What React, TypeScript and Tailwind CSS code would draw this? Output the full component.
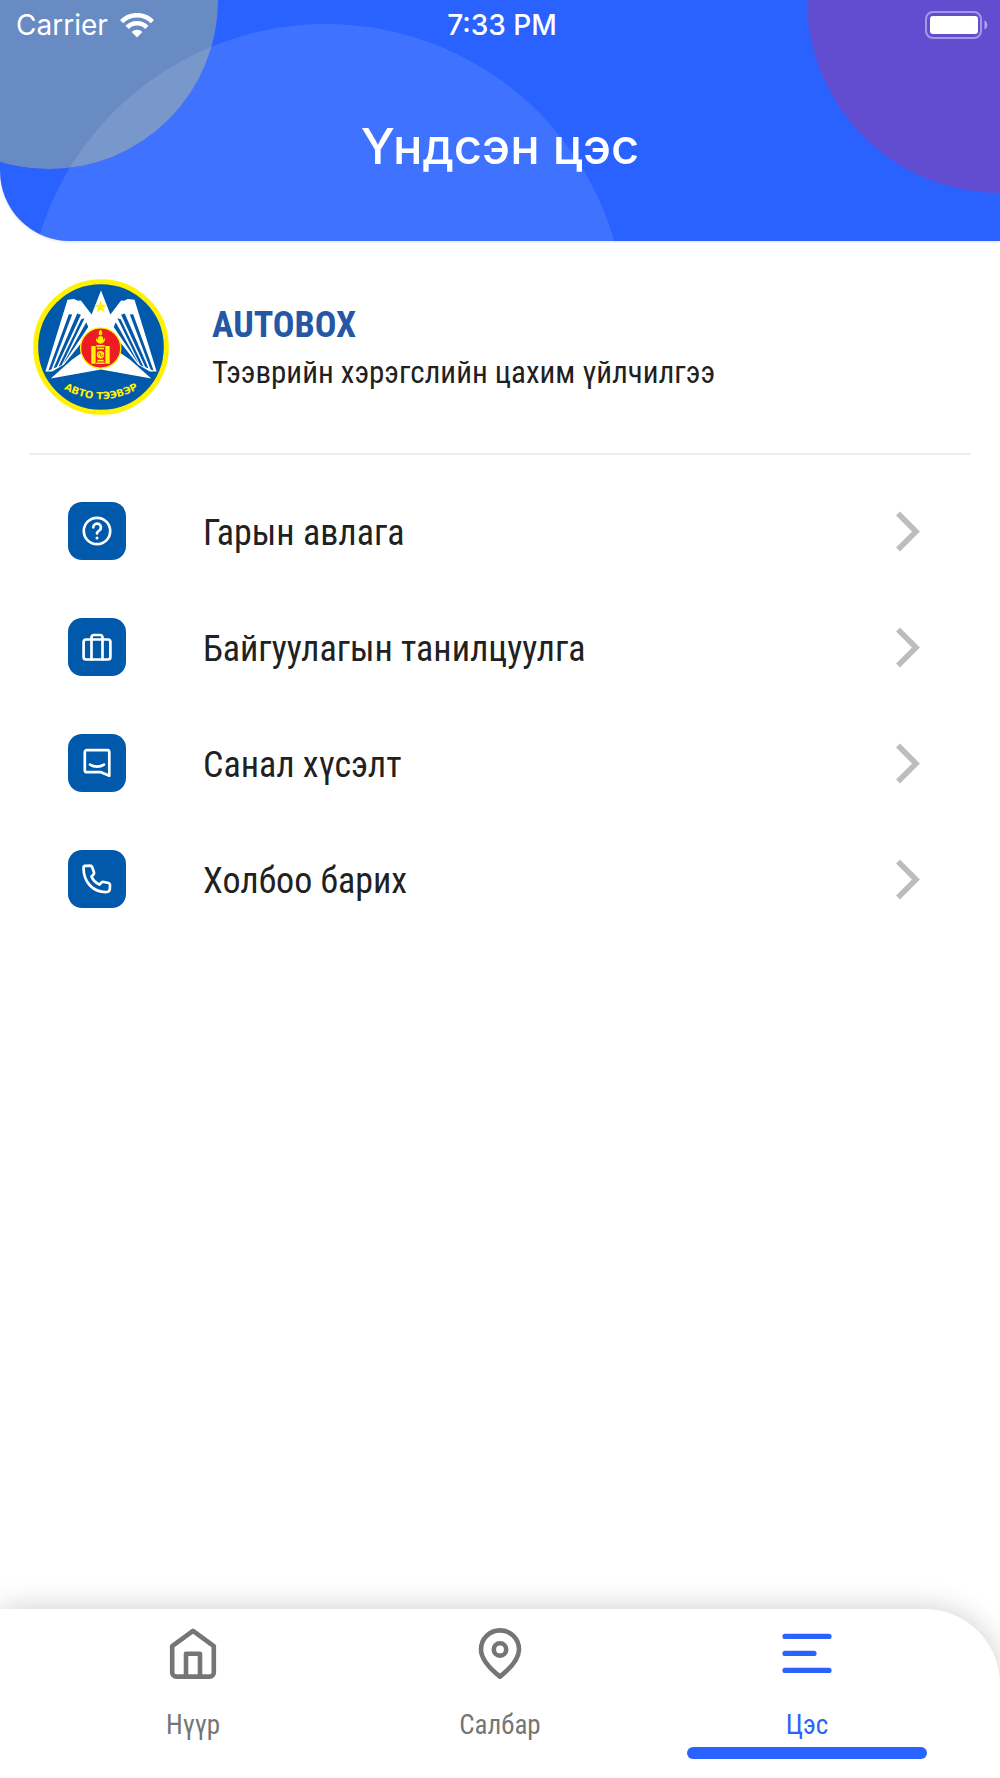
import type { ReactNode } from "react";
import clsx from "clsx";

const menuItems = [
  { label: "Гарын авлага", icon: <HelpIcon /> },
  { label: "Байгуулагын танилцуулга", icon: <SuitcaseIcon /> },
  { label: "Санал хүсэлт", icon: <MessageIcon /> },
  { label: "Холбоо барих", icon: <PhoneIcon /> },
];

const tabs = [
  { label: "Нүүр", icon: <HomeIcon />, active: false },
  { label: "Салбар", icon: <PinIcon />, active: false },
  { label: "Цэс", icon: <MenuIcon />, active: true },
];

function RowIcon({ children }: { children: ReactNode }) {
  return (
    <svg
      viewBox="0 0 32 32"
      className="h-8 w-8"
      fill="none"
      stroke="currentColor"
      strokeWidth="2.7"
      strokeLinecap="round"
      strokeLinejoin="round"
      aria-hidden="true"
    >
      {children}
    </svg>
  );
}

function HelpIcon() {
  return (
    <RowIcon>
      <circle cx="16" cy="16" r="13.2" />
      <path d="M12.3 12.3a3.8 3.8 0 1 1 6 3.2c-1.6 1.1-2.3 1.8-2.3 3" />
      <path d="M16 22.9v.1" strokeWidth="3" />
    </RowIcon>
  );
}

function SuitcaseIcon() {
  return (
    <RowIcon>
      <rect x="2.6" y="8.5" width="26.8" height="20" rx="2.5" />
      <path d="M10.5 8.5V6.2a2.2 2.2 0 0 1 2.2-2.2h6.6a2.2 2.2 0 0 1 2.2 2.2v2.3M10.5 8.5v20M21.5 8.5v20" />
    </RowIcon>
  );
}

function MessageIcon() {
  return (
    <RowIcon>
      <path d="M28.3 28.8 20 25.2H5.8a2 2 0 0 1-2-2V5.2a2 2 0 0 1 2-2h20.5a2 2 0 0 1 2 2z" />
      <path d="M9 17.6c4 2.6 10 2.6 14 0" />
    </RowIcon>
  );
}

function PhoneIcon() {
  return (
    <RowIcon>
      <path d="M4 2.8 9 2.6q1.6 0 2.2 1.6l1.8 5q.4 1.4-.7 2.5l-1.8 1.8c1.5 3.7 4.3 6.5 8 8.1l1.9-2q1-.9 2.4-.6l4.8 1q1.4.4 1.4 2l-.2 4q-.2 2.6-2.8 3C12 29.6 2.6 19 2.5 5q0-2 1.5-2.2z" />
    </RowIcon>
  );
}

function TabIcon({ children }: { children: ReactNode }) {
  return (
    <svg
      viewBox="0 0 52 52"
      className="h-[52px] w-[52px]"
      fill="none"
      stroke="currentColor"
      strokeWidth="4.6"
      strokeLinecap="round"
      strokeLinejoin="round"
      aria-hidden="true"
    >
      {children}
    </svg>
  );
}

function HomeIcon() {
  return (
    <TabIcon>
      <path d="M5.2 19.2 26 3.8l20.8 15.4v26.2a4.2 4.2 0 0 1-4.2 4.2H9.4a4.2 4.2 0 0 1-4.2-4.2z" />
      <path d="M19 49V26.8h14V49" />
    </TabIcon>
  );
}

function PinIcon() {
  return (
    <TabIcon>
      <path d="M26 49.6C19 44 7 34 7 22.4a19 19 0 0 1 38 0C45 34 33 44 26 49.6z" />
      <circle cx="26" cy="22.4" r="6.2" />
    </TabIcon>
  );
}

function MenuIcon() {
  return (
    <TabIcon>
      <path d="M4 9.4h44M4 26.4h29M4 43.4h44" strokeWidth="5.2" />
    </TabIcon>
  );
}

function WifiIcon() {
  return (
    <svg viewBox="0 0 34 25" className="h-[25px] w-[34px]" fill="none" stroke="currentColor" aria-hidden="true">
      <path d="M1.6 8.6a21.8 21.8 0 0 1 30.8 0" strokeWidth="4.6" />
      <path d="M7.1 14.3a14 14 0 0 1 19.8 0" strokeWidth="4.6" />
      <path d="M17 24.5 11.6 19a7.6 7.6 0 0 1 10.8 0z" fill="currentColor" stroke="none" />
    </svg>
  );
}

function BatteryIcon() {
  return (
    <svg viewBox="0 0 64 28" className="h-7 w-16" fill="none" aria-hidden="true">
      <rect x="2" y="1" width="55" height="26" rx="7" stroke="#fff" strokeOpacity=".42" strokeWidth="2" />
      <rect x="6" y="5" width="48" height="18" rx="3" fill="#fff" />
      <path d="M60.5 9.5c3.8 1.8 3.8 7.2 0 9z" fill="#fff" fillOpacity=".5" />
    </svg>
  );
}

/* One wing of the emblem, the other one is mirrored */
function Wing() {
  return (
    <g>
      <path d="M79 307 145 93l20-2 11 5 9-1 32 42 28-72v130l-45 10-66 82-35 20z" fill="#fff" />
      <path
        d="m149 136 10 1L97 301l-9 3zM174 134l11 4-72 156-10 4zM186 151l10-3-68 140-10 5zM201 160l6 14-66 98-9 12z"
        fill="#0059aa"
      />
      <path d="m95 328 63-56 32-22h55v51z" fill="#fff" />
    </g>
  );
}

function Emblem() {
  return (
    <svg viewBox="42 31 406 406" className="h-[136px] w-[136px] shrink-0" role="img" aria-label="Авто тээвэр">
      <defs>
        <path id="emblem-arc" d="M98 336Q245 444 392 336" />
      </defs>
      <circle cx="245" cy="234" r="195" fill="#0059aa" stroke="#fff200" strokeWidth="15" />
      <Wing />
      <g transform="matrix(-1 0 0 1 490 0)">
        <Wing />
      </g>
      <path d="m244 95 5 13h13l-10 9 4 14-12-8-12 8 4-14-10-9h13z" fill="#fff200" />
      <circle cx="244" cy="237" r="60" fill="#ed1c24" stroke="#fff200" strokeWidth="4" />
      <g fill="#fff200">
        <path d="M216 231h13v53h-13zM258 231h13v53h-13z" />
        <path d="M231 228h25v5h-25zM233 236h21v5h-21zM231 280h25v5h-25zM234 272h19v5h-19z" />
        <circle cx="243.5" cy="257" r="11" />
        <circle cx="243.5" cy="209" r="8" />
        <path d="M230 206c2 12 25 12 27 0 3 24-30 24-27 0zM243.5 182c9 10 5 16 0 18-6-3-8-8 0-18z" />
      </g>
      <path d="M237 257c2-7 8-7 7 0s5 7 7 0" fill="none" stroke="#ed1c24" strokeWidth="2.5" />
      <text
        fill="#fff200"
        fontSize="30"
        fontWeight="700"
        fontFamily="DejaVu Sans, Liberation Sans, sans-serif"
        textAnchor="middle"
      >
        <textPath href="#emblem-arc" startOffset="50%">
          АВТО ТЭЭВЭР
        </textPath>
      </text>
    </svg>
  );
}

function Header() {
  return (
    <header className="relative overflow-hidden rounded-bl-[70px] bg-[#2962ff] pb-16 text-white shadow-sm">
      <div className="absolute -top-[169px] -left-[120px] h-[338px] w-[338px] rounded-full bg-[#ffeb3b]/30" />
      <div className="absolute top-6 left-[26px] h-[600px] w-[600px] rounded-full bg-white/10" />
      <div className="absolute -top-[193px] -right-[193px] h-[386px] w-[386px] rounded-full bg-[#e91e63]/30" />

      {/* Status bar */}
      <div className="relative grid h-[50px] grid-cols-3 items-center pr-3 pl-4 font-[Inter,sans-serif] text-[28px] leading-8">
        <div className="flex items-center gap-3">
          <span>Carrier</span>
          <WifiIcon />
        </div>
        <span className="text-center font-medium">7:33 PM</span>
        <div className="flex justify-end">
          <BatteryIcon />
        </div>
      </div>

      <h1 className="relative mt-[67px] text-center font-[Inter,sans-serif] text-[49px] leading-[60px] font-medium">
        Үндсэн цэс
      </h1>
    </header>
  );
}

export default function App() {
  return (
    <div className="flex min-h-screen flex-col bg-white font-['Roboto_Condensed',Roboto,sans-serif] text-[#212121]">
      <Header />

      <main className="flex-1">
        <section className="mx-[29px] flex items-center gap-[43px] border-b-2 border-[#eeeeee] px-1 pt-[38px] pb-[38px]">
          <Emblem />
          <div className="pt-1">
            <h2 className="text-[36px] leading-[48px] font-bold text-[#2557a5]">AUTOBOX</h2>
            <p className="text-[31px] leading-[48px]">Тээврийн хэрэгслийн цахим үйлчилгээ</p>
          </div>
        </section>

        <ul className="pt-[18px]">
          {menuItems.map((item) => (
            <li key={item.label}>
              <button type="button" className="flex h-[116px] w-full items-center pr-20 pl-[68px] text-left">
                <span className="flex h-[58px] w-[58px] items-center justify-center rounded-[14px] bg-[#0059aa] text-white">
                  {item.icon}
                </span>
                <span className="ml-[77px] flex-1 pt-1 text-[36px] leading-[48px]">{item.label}</span>
                <svg viewBox="0 0 24 41" className="h-[41px] w-6" fill="none" aria-hidden="true">
                  <path d="M2 2.5 20 20.5 2 38.5" stroke="#bdbdbd" strokeWidth="5.6" />
                </svg>
              </button>
            </li>
          ))}
        </ul>
      </main>

      <nav className="flex justify-between rounded-tr-[75px] bg-white px-[73px] pt-[18px] pb-[19px] shadow-[0_0_30px_rgba(0,0,0,0.2)]">
        {tabs.map((tab) => (
          <a
            key={tab.label}
            href="#"
            aria-current={tab.active ? "page" : undefined}
            className={clsx(
              "flex w-60 flex-col items-center",
              tab.active ? "text-[#2962ff]" : "text-[#757575]"
            )}
          >
            {tab.icon}
            <span className="mt-[30px] text-[27px] leading-8">{tab.label}</span>
            <span className={clsx("mt-[6px] h-3 w-full rounded-full", tab.active && "bg-[#2962ff]")} />
          </a>
        ))}
      </nav>
    </div>
  );
}
